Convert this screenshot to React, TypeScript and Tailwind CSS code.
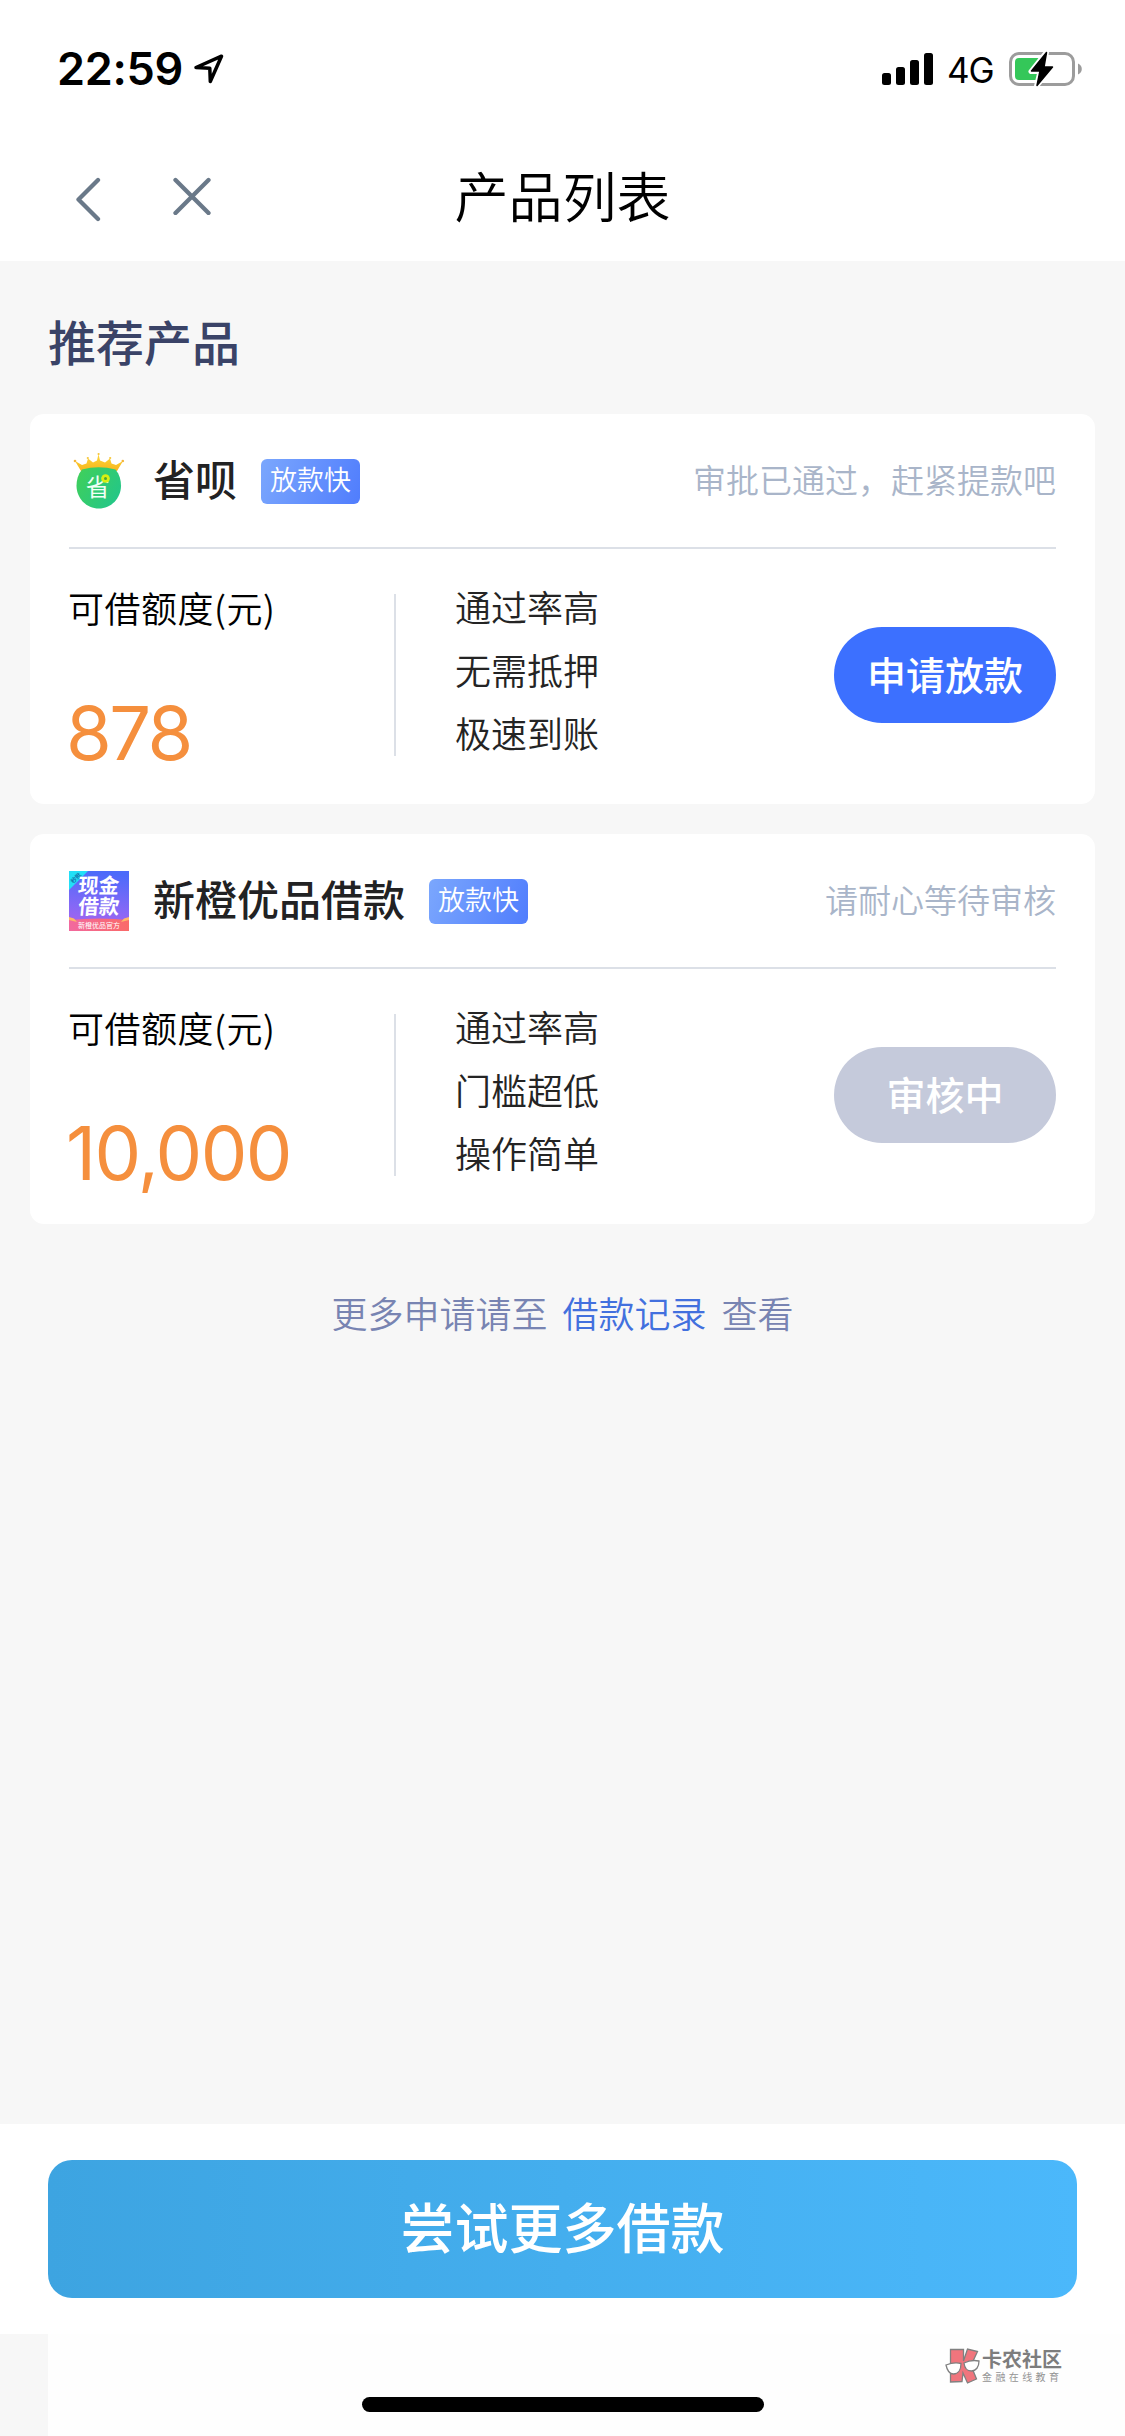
import React from "react";

type Product = {
  name: string;
  logo: React.ReactNode;
  status: string;
  amount: React.ReactNode;
  features: string[];
  action: string;
  pending?: boolean;
};

function CrownLogo() {
  return (
    <svg viewBox="0 0 60 60" className="mt-[1px] block h-[60px] w-[60px] overflow-visible">
      <defs>
        <linearGradient id="green" x1="0" y1="0.2" x2="1" y2="0.8">
          <stop offset="0" stopColor="#3fcf5c" />
          <stop offset="1" stopColor="#22c68a" />
        </linearGradient>
        <linearGradient id="gold" x1="0" y1="0" x2="0" y2="1">
          <stop offset="0" stopColor="#ffd83a" />
          <stop offset="1" stopColor="#f7b51d" />
        </linearGradient>
      </defs>
      <path
        d="M12 20 L6 10 L13 14 L17.500 12.500 L19 7.500 L24 11.500 L28 9.500 L29.500 3 L31 9.500 L36 11.500 L41 7.500 L42.500 12.500 L47 14 L54 10 L48 20 Z"
        fill="url(#gold)"
      />
      <circle cx="6" cy="10" r="1.300" fill="#f3b43a" />
      <circle cx="53.800" cy="10" r="1.300" fill="#f3b43a" />
      <circle cx="29.600" cy="3" r="1.100" fill="#f7c63a" />
      <circle cx="18.800" cy="7" r="1.100" fill="#f7c63a" />
      <circle cx="41.200" cy="7" r="1.100" fill="#f7c63a" />
      <path
        d="M13 18.500 Q29.500 14 46.500 18.500 C50.500 23.500 52 29 52 34.500 C52 47.500 42 57.500 29.800 57.500 C17.500 57.500 7.500 47.500 7.500 34.500 C7.500 29 9 23.500 13 18.500 Z"
        fill="url(#green)"
      />
      <text
        x="28.800"
        y="44.500"
        textAnchor="middle"
        fontSize="24"
        fill="#f1fff6"
        fontFamily="'Noto Sans CJK SC', sans-serif"
      >
        省
      </text>
      <circle cx="36.500" cy="27.500" r="4.300" fill="#d8ef12" />
      <circle cx="36.500" cy="27.500" r="1.500" fill="#4ba832" />
    </svg>
  );
}

function CashLogo() {
  return (
    <svg viewBox="0 0 60 60" className="mt-[1px] block h-[60px] w-[60px] overflow-visible">
      <defs>
        <linearGradient id="violet" x1="0.3" y1="0" x2="0.2" y2="1">
          <stop offset="0" stopColor="#4c6bfa" />
          <stop offset="0.6" stopColor="#8568f6" />
          <stop offset="1" stopColor="#b062ea" />
        </linearGradient>
        <linearGradient id="coral" x1="0" y1="0" x2="1" y2="0">
          <stop offset="0" stopColor="#f2699f" />
          <stop offset="1" stopColor="#fa6a68" />
        </linearGradient>
      </defs>
      <rect width="60" height="60" fill="url(#violet)" />
      <path d="M0 0H19L0 19Z" fill="#22dff7" />
      <text
        x="7"
        y="9"
        fontSize="6"
        fontWeight="700"
        fill="#1673ac"
        textAnchor="middle"
        transform="rotate(-45 7 7)"
        fontFamily="'Noto Sans CJK SC', sans-serif"
      >
        秒批
      </text>
      <g
        fill="#fff"
        fontSize="20.500"
        fontWeight="700"
        fontFamily="'Noto Sans CJK SC', sans-serif"
        transform="skewX(-5)"
      >
        <text x="10.500" y="21.500">现金</text>
        <text x="12.500" y="43.500">借款</text>
      </g>
      <path d="M0 49 Q30 46 60 49V60H0Z" fill="url(#coral)" />
      <path d="M0 46 L5 47.500 L8 51 L0 49Z M60 46 L55 47.500 L52 51 L60 49Z" fill="#ffb668" />
      <text
        x="30"
        y="56.500"
        fontSize="7"
        fill="#fff"
        textAnchor="middle"
        fontFamily="'Noto Sans CJK SC', sans-serif"
      >
        新橙优品官方
      </text>
    </svg>
  );
}

const products: Product[] = [
  {
    name: "省呗",
    logo: <CrownLogo />,
    status: "审批已通过，赶紧提款吧",
    amount: <span className="tracking-[-2.500px]">878</span>,
    features: ["通过率高", "无需抵押", "极速到账"],
    action: "申请放款",
  },
  {
    name: "新橙优品借款",
    logo: <CashLogo />,
    status: "请耐心等待审核",
    amount: <span className="tracking-[-1.600px]">10,000</span>,
    features: ["通过率高", "门槛超低", "操作简单"],
    action: "审核中",
    pending: true,
  },
];

function StatusBar() {
  return (
    <div className="flex h-[138px] items-center justify-between pr-[43px] pl-[57px] font-['Inter',sans-serif] text-black">
      <div className="flex items-center">
        <span className="w-[137px] text-[45px] leading-[54px] font-semibold tracking-[-0.300px] whitespace-nowrap">
          22:59
        </span>
        <svg viewBox="0 0 30 30" className="block h-[30px] w-[30px]">
          <path
            d="M2 13.500 L27.500 2.200 L16.300 27.500 L15.800 14.200 Z"
            fill="none"
            stroke="#000"
            strokeWidth="3.500"
            strokeLinejoin="round"
          />
        </svg>
      </div>
      <div className="flex items-center">
        <svg viewBox="0 0 51 32" className="block h-[32px] w-[51px]">
          <rect x="0" y="20" width="9" height="12" rx="2.500" />
          <rect x="14" y="14" width="9" height="18" rx="2.500" />
          <rect x="28" y="7" width="9" height="25" rx="2.500" />
          <rect x="42" y="0" width="9" height="32" rx="2.500" />
        </svg>
        <span className="mt-[2px] ml-[14px] w-[62px] text-[35px] leading-[40px] font-normal tracking-[-1px]">4G</span>
        <svg viewBox="0 0 73 36" className="block h-[36px] w-[73px]">
          <rect x="1.500" y="2.500" width="63" height="31" rx="8.500" fill="#fff" stroke="#9c9c9c" strokeWidth="3" />
          <path d="M69 12.500 C71.500 13.500 72.800 15.500 72.800 18 C72.800 20.500 71.500 22.500 69 23.500Z" fill="#9c9c9c" />
          <rect x="6" y="7" width="26" height="22" rx="4" fill="#34c759" />
          <path
            d="M37.500 1 L22 20.500 H31 L27.500 35 L44 15.500 H35 Z"
            fill="#000"
            stroke="#fff"
            strokeWidth="5"
            strokeLinejoin="round"
          />
          <path
            d="M37.500 1.500 L22.500 20 H31 L28 34.500 L43.500 16 H35 Z"
            fill="#000"
            stroke="#000"
            strokeWidth="1.500"
            strokeLinejoin="round"
          />
        </svg>
      </div>
    </div>
  );
}

function NavBar() {
  return (
    <div className="grid h-[123px] grid-cols-3 items-start pt-[29px]">
      <div className="flex items-start gap-[72px] pt-[10px] pl-[75px]">
        <svg viewBox="0 0 26 45" className="block h-[45px] w-[26px]">
          <path
            d="M23 3 L3.500 22.500 L23 42"
            fill="none"
            stroke="#6a7989"
            strokeWidth="4.300"
            strokeLinecap="round"
            strokeLinejoin="round"
          />
        </svg>
        <svg viewBox="0 0 38 38" className="block h-[38px] w-[38px]">
          <path
            d="M2.500 3 L35.500 36 M35.500 3 L2.500 36"
            fill="none"
            stroke="#6a7989"
            strokeWidth="4.300"
            strokeLinecap="round"
          />
        </svg>
      </div>
      <h1 className="pt-[1px] text-center text-[54px] leading-[54px] font-[350] text-black">产品列表</h1>
    </div>
  );
}

function ProductCard({ name, logo, status, amount, features, action, pending }: Product) {
  return (
    <article className="h-[390px] rounded-[14px] bg-white px-[39px]">
      <div className="flex h-[135px] items-center border-b-2 border-[#dce0e7]">
        {logo}
        <h3 className="-mt-[5px] ml-6 text-[42px] leading-[60px] font-medium text-[#222223]">{name}</h3>
        <span className="mt-[1px] ml-6 h-[45px] w-[99px] rounded-[6px] bg-linear-[110deg] from-[#7ba7fd] to-[#507dfd] text-center text-[27px] leading-[39px] font-[350] text-white">
          放款快
        </span>
        <span className="-mt-[4px] ml-auto text-[33px] leading-[48px] font-[350] text-[#a9b5c9]">{status}</span>
      </div>
      <div className="flex">
        <div className="w-[325px] pt-[32px]">
          <p className="-ml-[1px] text-[36px] leading-[52px] font-[350] tracking-[0.500px] text-black">可借额度(元)</p>
          <p className="mt-[54px] -ml-[3px] font-['Inter',sans-serif] text-[74px] leading-[92px] font-normal text-[#f58f3d]">
            {amount}
          </p>
        </div>
        <div className="mt-[45px] h-[162px] w-[2px] bg-[#dce0e7]" />
        <ul className="ml-[59px] pt-[26px] text-[36px] leading-[63px] font-[350] text-[#242424]">
          {features.map((feature) => (
            <li key={feature}>{feature}</li>
          ))}
        </ul>
        <button
          className={
            "mt-[78px] ml-auto h-[96px] w-[222px] rounded-full pb-[4px] text-[39px] leading-[92px] font-medium text-white " +
            (pending ? "bg-[#c5cadb]" : "bg-[#3c70ff]")
          }
        >
          {action}
        </button>
      </div>
    </article>
  );
}

function CommunityMark() {
  return (
    <div className="flex items-center text-[#7d7d7d]">
      <svg viewBox="0 0 35 36" className="block h-[36px] w-[35px]">
        <path
          d="M5.500 1.500 H18.500 V13 L22.500 1 L32.500 3.500 L26 17.500 L31.500 31 L22.500 35 L18 25 L17 33.500 L5.500 34 Z"
          fill="#f0757d"
          stroke="#808080"
          strokeWidth="1.300"
        />
        <path
          d="M1 17 C6 15 12 14.500 16 15.500 C16 22 13 26 8.500 26 C4 26 2 22 1 17Z M19 15 C24 12.500 29 12 34 13 C34 19 31 23 26.500 23 C22 23 19.500 20 19 15Z"
          fill="#fff"
          stroke="#808080"
          strokeWidth="1.300"
        />
      </svg>
      <div className="ml-[2px] w-[84px]">
        <p className="text-[20px] leading-[20px] font-bold">卡农社区</p>
        <p className="text-[10px] leading-[15px] tracking-[3.400px] whitespace-nowrap text-[#949494]">金融在线教育</p>
      </div>
    </div>
  );
}

export default function App() {
  return (
    <div className="flex h-[2436px] w-[1125px] flex-col overflow-hidden bg-[#f7f7f7] font-['Noto_Sans_CJK_SC',sans-serif]">
      <header className="h-[261px] bg-white">
        <StatusBar />
        <NavBar />
      </header>

      <main className="flex-1 px-[30px]">
        <h2 className="pt-[43px] pl-[18px] text-[48px] leading-[72px] font-medium text-[#3a4367]">推荐产品</h2>
        <div className="mt-[38px] flex flex-col gap-[30px]">
          {products.map((product) => (
            <ProductCard key={product.name} {...product} />
          ))}
        </div>
        <p className="mt-[61px] flex justify-center gap-[15px] text-[36px] leading-[54px] font-[350] text-[#7884b2]">
          <span>更多申请请至</span>
          <a className="text-[#4270de]">借款记录</a>
          <span>查看</span>
        </p>
      </main>

      <footer>
        <div className="bg-white px-12 py-9">
          <button className="block h-[138px] w-full rounded-[24px] bg-linear-to-r from-[#3da4e1] to-[#4bb8fb] pb-[7px] text-[54px] leading-[131px] font-medium text-white">
            尝试更多借款
          </button>
        </div>
        <div className="ml-12 flex h-[102px] flex-col bg-[#fefefe]">
          <div className="mt-[14px] flex justify-end pr-[59px]">
            <CommunityMark />
          </div>
          <div className="mt-auto mb-6 ml-[314px] h-[15px] w-[402px] rounded-full bg-black" />
        </div>
      </footer>
    </div>
  );
}
